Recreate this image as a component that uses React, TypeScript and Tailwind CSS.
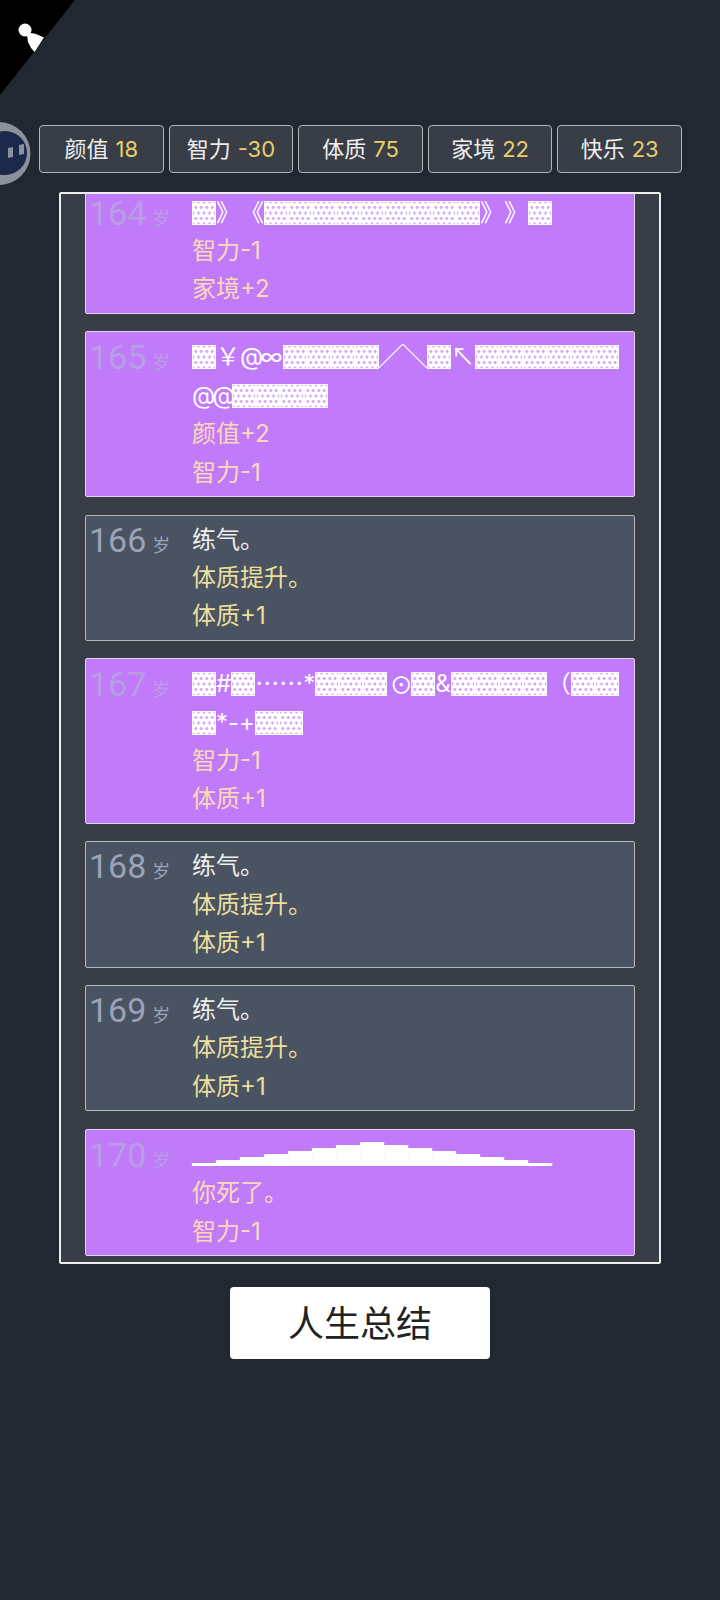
const sans = "font-['Inter','Noto_Sans_CJK_SC',sans-serif]";

const stats = [
  { label: '颜值', value: '18' },
  { label: '智力', value: '-30' },
  { label: '体质', value: '75' },
  { label: '家境', value: '22' },
  { label: '快乐', value: '23' },
];

const events = [
  { age: 164, rare: true, lines: ['▓》《▓▓▓▓▓▓▓▓▓》》▓'], effects: ['智力-1', '家境+2'] },
  { age: 165, rare: true, lines: ['▓￥@∞▓▓▓▓╱╲▓↖▓▓▓▓▓▓@@▓▓▓▓'], effects: ['颜值+2', '智力-1'] },
  { age: 166, rare: false, lines: ['练气。'], effects: ['体质提升。', '体质+1'] },
  { age: 167, rare: true, lines: ['▓#▓……*▓▓▓☉▓&▓▓▓▓（▓▓▓*-+▓▓'], effects: ['智力-1', '体质+1'] },
  { age: 168, rare: false, lines: ['练气。'], effects: ['体质提升。', '体质+1'] },
  { age: 169, rare: false, lines: ['练气。'], effects: ['体质提升。', '体质+1'] },
  { age: 170, rare: true, lines: ['▁▂▃▄▅▆▇█▇▆▅▄▃▂▁'], effects: ['你死了。', '智力-1'] },
];

// the garbled text: keep the glyph, paint the dotted cell behind it
const Garbled = ({ text }: { text: string }) => (
  <>
    {text.split(/(▓|……|↖|☉|@+)/).map((part, i) => {
      if (part === '▓') {
        return (
          <span
            key={i}
            className="inline-block w-[24px] h-[24px] align-[1px] leading-[22px] text-[20px] text-transparent bg-white border border-white bg-clip-padding bg-[radial-gradient(circle,#d3a5fb_1.2px,transparent_1.7px),radial-gradient(circle,#d3a5fb_1.2px,transparent_1.7px)] bg-[length:5.5px_11px] bg-[position:0_0,2.75px_5.5px]"
          >
            ▓
          </span>
        );
      }
      if (part === '……' || part === '↖') {
        return (
          <span key={i} className="font-['Noto_Sans_CJK_SC',sans-serif] leading-[24px]">
            {part}
          </span>
        );
      }
      if (part === '☉') {
        return (
          <span key={i} className="inline-block w-[24px] h-[24px] text-center text-[28px] leading-[24px] align-[-4px]">
            {part}
          </span>
        );
      }
      if (part.startsWith('@')) {
        return (
          <span key={i} className="tracking-[-3px]">
            {part}
          </span>
        );
      }
      return <span key={i}>{part}</span>;
    })}
  </>
);

const App = () => {
  return (
    <div className={`relative w-[720px] h-[1600px] overflow-hidden bg-[#222831] [text-spacing-trim:space-all] ${sans}`}>
      <svg className="absolute left-0 top-0" width="76" height="96" viewBox="0 0 76 96">
        <polygon points="0,0 75,0 0,95" fill="#000" />
        <circle cx="25" cy="30" r="6.5" fill="#fff" />
        <path d="M27 35 L31 33 L36 34 L44 37.5 L34.5 52 L31 48 L28 42 Z" fill="#fff" />
      </svg>

      <svg className="absolute left-0 top-[120px]" width="34" height="68" viewBox="0 0 34 68">
        <circle cx="-1" cy="33.5" r="31.5" fill="#8b929b" />
        <circle cx="5" cy="33" r="22" fill="#1b2a4a" />
        <path d="M8 28 L13 27 L13 37 L8 38 Z M19 25 L24 24 L24 34 L19 35 Z" fill="#8b929b" />
      </svg>

      <div className="pt-[125px] pl-[39px] pr-[39px] flex gap-[5px]">
        {stats.map((s) => (
          <div
            key={s.label}
            className="w-[124.6px] h-[48px] shrink-0 flex items-center justify-center gap-[7px] rounded-[4px] border border-[#b2b5ba] bg-[#393e46] text-[22px] text-[#eeeeee]"
          >
            <span>{s.label}</span>
            <span className="text-[#e8cf6b]">{s.value}</span>
          </div>
        ))}
      </div>

      <div className="mt-[19px] ml-[59px] w-[602px] h-[1072px] overflow-hidden flex flex-col justify-end gap-[17.5px] rounded-[2px] border-2 border-[#eeeeee] bg-[#393e46] px-[24px] pb-[6px]">
        {events.map((e) => (
          <div
            key={e.age}
            className={`shrink-0 flex rounded-[2px] border pb-[4px] text-[24px] leading-[38.4px] ${
              e.rare ? 'pt-[6px] bg-[#c07afa] border-[#e2d2f2]' : 'pt-[5px] bg-[#4a5361] border-[#b4b8bf]'
            }`}
          >
            <div
              className={`w-[106px] shrink-0 pl-[3px] font-['Roboto','Noto_Sans_CJK_SC',sans-serif] ${
                e.rare ? 'text-[#b89fe3]' : 'text-[#9aa3b8]'
              }`}
            >
              <span className="text-[34px]">{e.age}</span>
              <span className="ml-[6px] text-[18px]">岁</span>
            </div>
            <div className="min-w-0 flex-1 pr-[8px]">
              {e.lines.map((l) => (
                <div key={l} className={`break-all ${e.rare ? 'text-white' : 'text-[#eeeeee]'}`}>
                  <Garbled text={l} />
                </div>
              ))}
              {e.effects.map((l, i) => (
                <div key={i} className={e.rare ? 'text-[#fbd9b8]' : 'text-[#ecdf9d]'}>
                  {l}
                </div>
              ))}
            </div>
          </div>
        ))}
      </div>

      <div className="mt-[23px] flex justify-center">
        <button className="w-[260px] h-[72px] pt-[2px] rounded-[4px] bg-white text-[36px] text-[#222222]">人生总结</button>
      </div>
    </div>
  );
};

export default App;
